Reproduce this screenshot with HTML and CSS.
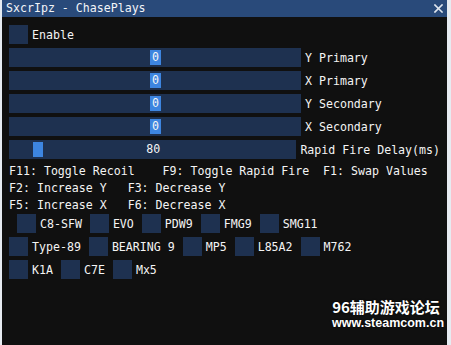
FILE: index.html
```html
<!DOCTYPE html>
<html>
<head>
<meta charset="utf-8">
<link rel="stylesheet" href="styles.css">
</head>
<body>
<div class="window">
  <div class="titlebar">
    <span class="title">SxcrIpz - ChasePlays</span>
    <svg class="close" width="9" height="9" viewBox="0 0 9 9"><path d="M1 1 L8 8 M8 1 L1 8" stroke="#dfe6ef" stroke-width="1.6" stroke-linecap="square"/></svg>
  </div>
  <div class="content">
    <div class="check"><span class="box"></span><span>Enable</span></div>
    <div class="sliders">
      <div class="row"><div class="slider"><div class="grab" style="left:141px"></div><span class="val hl">0</span></div><span class="lbl">Y Primary</span></div>
      <div class="row"><div class="slider"><div class="grab" style="left:141px"></div><span class="val hl">0</span></div><span class="lbl">X Primary</span></div>
      <div class="row"><div class="slider"><div class="grab" style="left:141px"></div><span class="val hl">0</span></div><span class="lbl">Y Secondary</span></div>
      <div class="row"><div class="slider"><div class="grab" style="left:141px"></div><span class="val hl">0</span></div><span class="lbl">X Secondary</span></div>
      <div class="row"><div class="slider"><div class="grab" style="left:24px"></div><span class="val">80</span></div><span class="lbl">Rapid Fire Delay(ms)</span></div>
    </div>
    <div class="lower">
<pre class="keys">F11: Toggle Recoil    F9: Toggle Rapid Fire  F1: Swap Values
F2: Increase Y   F3: Decrease Y
F5: Increase X   F6: Decrease X</pre>
      <div class="checks">
        <div class="crow indent">
          <div class="check"><span class="box"></span><span>C8-SFW</span></div>
          <div class="check"><span class="box"></span><span>EVO</span></div>
          <div class="check"><span class="box"></span><span>PDW9</span></div>
          <div class="check"><span class="box"></span><span>FMG9</span></div>
          <div class="check"><span class="box"></span><span>SMG11</span></div>
        </div>
        <div class="crow">
          <div class="check"><span class="box"></span><span>Type-89</span></div>
          <div class="check"><span class="box"></span><span>BEARING 9</span></div>
          <div class="check"><span class="box"></span><span>MP5</span></div>
          <div class="check"><span class="box"></span><span>L85A2</span></div>
          <div class="check"><span class="box"></span><span>M762</span></div>
        </div>
        <div class="crow">
          <div class="check"><span class="box"></span><span>K1A</span></div>
          <div class="check"><span class="box"></span><span>C7E</span></div>
          <div class="check"><span class="box"></span><span>Mx5</span></div>
        </div>
      </div>
    </div>
  </div>
  <div class="watermark">
    <div class="wm1">96辅助游戏论坛</div>
    <div class="wm2">www.steamcom.cn</div>
  </div>
</div>
</body>
</html>
```
FILE: styles.css
```css
html, body {
  margin: 0;
  padding: 0;
}
body {
  width: 451px;
  height: 345px;
  background: #e6ebf1;
  overflow: hidden;
  font-family: "DejaVu Sans Mono", "Liberation Mono", monospace;
  font-size: 11.6px;
  color: #f4f4f4;
}
.window {
  position: relative;
  margin-left: 2px;
  width: 445px;
  height: 345px;
  background: #101010;
}
.titlebar {
  height: 17px;
  background: #294a7a;
  display: flex;
  align-items: center;
  justify-content: space-between;
  padding: 0 4px;
}
.title {
  line-height: 17px;
  color: #f2f4f8;
}
.close {
  display: block;
  margin-top: -1px;
}
.content {
  padding: 8px 7px 0 7px;
  display: flex;
  flex-direction: column;
  gap: 4px;
}
.check {
  display: flex;
  align-items: center;
  gap: 4px;
  height: 19px;
}
.box {
  width: 19px;
  height: 19px;
  background: #1e3150;
  flex: none;
}
.sliders {
  display: flex;
  flex-direction: column;
  gap: 4px;
}
.row {
  display: flex;
  align-items: center;
  gap: 4px;
  height: 19px;
}
.slider {
  position: relative;
  width: 292px;
  height: 19px;
  background: #1e3150;
  display: flex;
  align-items: center;
  justify-content: center;
}
.grab {
  position: absolute;
  top: 2px;
  width: 10px;
  height: 15px;
  background: #3d85e0;
}
.val {
  position: relative;
  line-height: 13px;
  margin-left: 1px;
}
.val.hl {
  background: #3d85e0;
  padding: 1px 2px;
}
.lbl {
  white-space: nowrap;
}
.lower {
  display: flex;
  flex-direction: column;
}
.keys {
  margin: 0;
  font: inherit;
  line-height: 17px;
}
.checks {
  display: flex;
  flex-direction: column;
  gap: 4px;
}
.crow {
  display: flex;
  gap: 8px;
}
.crow.indent {
  padding-left: 8px;
}
.watermark {
  position: absolute;
  left: 327px;
  top: 298px;
  width: 118px;
  text-align: center;
  font-family: "Liberation Sans", "Noto Sans CJK SC", sans-serif;
  font-weight: bold;
  color: #ffffff;
  text-shadow: 0 0 2px rgba(0,0,0,0.8);
}
.wm1 {
  font-family: "Noto Sans CJK SC", sans-serif;
  font-size: 15px;
  line-height: 17px;
  margin-left: -4px;
}
.wm2 {
  font-size: 12.5px;
  line-height: 15px;
  margin-top: 1px;
}
```
